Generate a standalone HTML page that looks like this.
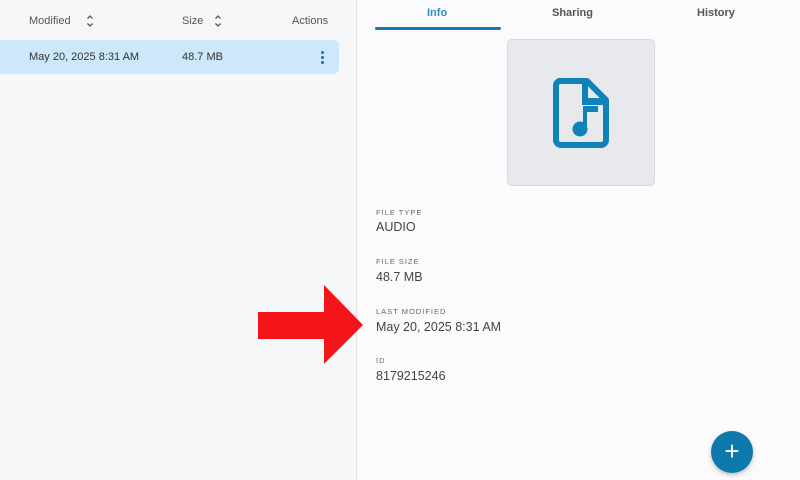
<!DOCTYPE html>
<html><head><style>
*{margin:0;padding:0;box-sizing:border-box}
body{width:800px;height:480px;overflow:hidden;font-family:"Liberation Sans",sans-serif;background:#fbfbfd;position:relative;color:#333}
.left{position:absolute;left:0;top:0;width:357px;height:480px;background:#f6f7f9;border-right:1px solid #e2e3e6}
.t{position:absolute;font-size:11px;color:#555}
.row{position:absolute;left:0;top:40px;width:339px;height:34px;background:#cde7fb;border-radius:0 6px 6px 0}
.lbl{position:absolute;left:376px;font-size:7.5px;letter-spacing:1px;color:#666}
.val{position:absolute;left:376px;font-size:12.5px;color:#444}
</style></head><body>
<div class="left">
<div class="t" style="left:29px;top:15px">Modified</div>
<svg style="position:absolute;left:86px;top:14px" width="8" height="14"><path d="M1.5 4.5L4 2l2.5 2.5M1.5 9.5L4 12l2.5-2.5" fill="none" stroke="#555" stroke-width="1.3"/></svg>
<div class="t" style="left:182px;top:15px">Size</div>
<svg style="position:absolute;left:214px;top:14px" width="8" height="14"><path d="M1.5 4.5L4 2l2.5 2.5M1.5 9.5L4 12l2.5-2.5" fill="none" stroke="#555" stroke-width="1.3"/></svg>
<div class="t" style="left:292px;top:15px">Actions</div>
<div class="row">
<div class="t" style="left:29px;top:11px;color:#333">May 20, 2025 8:31 AM</div>
<div class="t" style="left:182px;top:11px;color:#333">48.7 MB</div>
<div style="position:absolute;left:321px;top:11px;width:3px">
<div style="width:3px;height:3px;border-radius:50%;background:#1278ad;margin-bottom:2px"></div>
<div style="width:3px;height:3px;border-radius:50%;background:#1278ad;margin-bottom:2px"></div>
<div style="width:3px;height:3px;border-radius:50%;background:#1278ad"></div></div>
</div>
</div>
<div style="position:absolute;left:427px;top:7px;font-size:11px;font-weight:bold;color:#2a8fc2">Info</div>
<div style="position:absolute;left:552px;top:7px;font-size:11px;font-weight:bold;color:#555">Sharing</div>
<div style="position:absolute;left:697px;top:7px;font-size:11px;font-weight:bold;color:#555">History</div>
<div style="position:absolute;left:375px;top:27px;width:126px;height:3px;background:#137bb0;border-radius:2px"></div>
<div style="position:absolute;left:507px;top:39px;width:148px;height:147px;background:#e8e9ec;border:1px solid #d8d9dc;border-radius:5px"></div>
<svg style="position:absolute;left:553px;top:78px" width="56" height="70" viewBox="0 0 56 70">
<path d="M6 3h28l19 19v40a5 5 0 0 1-5 5H8a5 5 0 0 1-5-5V8a5 5 0 0 1 3-5z" fill="none" stroke="#0f82b8" stroke-width="6" stroke-linejoin="round"/>
<path d="M32 2v22h22" fill="none" stroke="#0f82b8" stroke-width="6"/>
<rect x="30" y="20" width="24" height="6" fill="#0f82b8"/>
<rect x="30" y="28" width="4" height="24" fill="#0f82b8"/>
<rect x="30" y="28" width="15" height="6" fill="#0f82b8"/>
<circle cx="27" cy="51" r="7.5" fill="#0f82b8"/>
</svg>
<div class="lbl" style="top:208px">FILE TYPE</div>
<div class="val" style="top:220px">AUDIO</div>
<div class="lbl" style="top:257px">FILE SIZE</div>
<div class="val" style="top:270px">48.7 MB</div>
<div class="lbl" style="top:307px">LAST MODIFIED</div>
<div class="val" style="top:320px">May 20, 2025 8:31 AM</div>
<div class="lbl" style="top:356px">ID</div>
<div class="val" style="top:369px">8179215246</div>
<svg style="position:absolute;left:0;top:0" width="800" height="480">
<polygon points="258,312 324,312 324,285 363,325 324,364 324,339 258,339" fill="#f5141a"/>
</svg>
<div style="position:absolute;left:711px;top:431px;width:42px;height:42px;border-radius:50%;background:#0e79ac;box-shadow:0 2px 5px rgba(0,0,0,.25);color:#fff;font-size:26px;line-height:40px;text-align:center">+</div>
</body></html>
